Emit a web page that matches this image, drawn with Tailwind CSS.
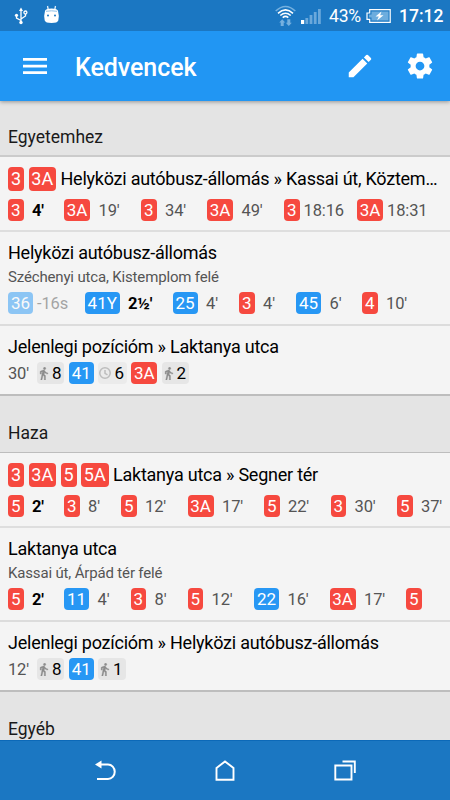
<!DOCTYPE html>
<html lang="hu">
<head>
<meta charset="utf-8">
<title>Kedvencek</title>
<script src="https://cdn.jsdelivr.net/npm/@tailwindcss/browser@4"></script>
</head>
<body class="w-[450px] h-[800px] overflow-hidden bg-[#e4e4e4] font-['Roboto','Noto_Sans',sans-serif] flex flex-col text-black">
<header class="relative z-10 shrink-0 shadow-[0_1px_4px_rgba(0,0,0,0.35)]">
  <div class="h-[31px] bg-[#1b77c2] flex items-center text-white">
    <svg class="ml-[14px] mt-px" width="14" height="18" viewBox="0 0 14 18" fill="none" stroke="#fff" stroke-width="1.3"><path d="M7 3v12M7 13.500L2.500 11V8M7 12L11.500 9V7"/><path d="M5 4l2-3.500L9 4z" fill="#fff" stroke="none"/><circle cx="2.500" cy="8.300" r="1.600" fill="#fff" stroke="none"/><circle cx="7" cy="15.500" r="1.700" fill="#fff" stroke="none"/><circle cx="11.400" cy="5.500" r="1.500"/></svg>
    <svg class="ml-[15px] -mt-[2px]" width="17" height="19" viewBox="0 0 17 19"><path d="M4.500 1l.8 4M12.500 1l-.8 4" stroke="#e3f0fa" stroke-width="1.300"/><path d="M2 6Q2.300 3.500 8.500 3.500T15 6Q16.500 11 15.300 15.500Q14.500 18 8.500 18T1.700 15.500Q.5 11 2 6z" fill="#fff"/><path d="M3 6.300Q8.500 5.300 14 6.300" stroke="#8fc0e8" fill="none"/><circle cx="5" cy="10.500" r="1" fill="#1b77c2"/><circle cx="12" cy="10.500" r="1" fill="#1b77c2"/></svg>
    <svg class="ml-[215px]" width="21" height="22" viewBox="0 0 21 22" fill="none" stroke="#fff" stroke-width="1.600"><path d="M.7 6Q10.500-3 20.300 6" stroke="#75b0df"/><path d="M3 8.300Q10.500 1.500 18 8.300M5.300 10.500Q10.500 6 15.700 10.500M7.700 12.600Q10.500 10.300 13.300 12.600"/><path d="M7.200 14.300l3 3.200H8.700v3.500H5.700v-3.500H4.200zM13.800 21l-3-3.200h1.500v-3.500h3v3.500h1.500z" fill="#75b0df" stroke="none"/></svg>
    <svg class="ml-[5px] mt-px" width="20" height="16" viewBox="0 0 20 16" fill="#6aa8db"><path d="M0 12h3.200v4H0z" fill="#fff"/><path d="M4.400 10h2.800v6H4.400zM8.600 7h2.800v9H8.600zM12.800 4h2.800v12h-2.800zM17 1h2.800v15H17z"/></svg>
    <span class="ml-[8px] w-[37px] text-[17.500px] leading-none whitespace-nowrap mt-[2px] tracking-[-0.2px]">43%</span>
    <svg width="25" height="14" viewBox="0 0 25 14"><path d="M3.700.7h20.500v12.600H3.700v-3H1V4h2.700z" fill="none" stroke="#fff" stroke-width="1.200"/><path d="M5.500 2.500h17v9h-17v-3H3v-3h2.500z" fill="#6dadde"/><path d="M15.500 2.500L9.500 7.500h3.300L11 11.500l6.500-5.300h-3.300z" fill="#fff"/></svg>
    <span class="ml-[8px] text-[17.5px] font-medium leading-none mt-[2px]">17:12</span>
  </div>
  <div class="h-[70px] bg-[#2196f3] flex items-center text-white">
    <svg class="ml-[23px]" width="24" height="16" viewBox="0 0 24 16" fill="#fff"><path d="M0 0h24v2.700H0zM0 6.700h24v2.700H0zM0 13.300h24V16H0z"/></svg>
    <h1 class="ml-[28px] text-[25px] leading-none font-medium mt-[2px] w-[265px] tracking-[-0.05px]">Kedvencek</h1>
    <svg class="ml-[5px]" width="30" height="30" viewBox="0 0 24 24" fill="#fff"><path d="M3 17.250V21h3.750L17.810 9.940l-3.750-3.750L3 17.250zM20.710 7.040a1 1 0 0 0 0-1.410l-2.340-2.340a1 1 0 0 0-1.410 0l-1.830 1.830 3.750 3.750 1.830-1.830z"/></svg>
    <svg class="ml-[30px]" width="30" height="30" viewBox="0 0 24 24" fill="#fff"><path d="M19.430 12.980c.04-.32.07-.64.07-.98s-.03-.66-.07-.98l2.110-1.650c.19-.15.24-.42.12-.64l-2-3.460c-.12-.22-.39-.3-.61-.22l-2.490 1c-.52-.4-1.080-.73-1.690-.98l-.38-2.650C14.460 2.180 14.250 2 14 2h-4c-.25 0-.46.18-.49.42l-.38 2.650c-.61.25-1.170.59-1.690.98l-2.490-1c-.23-.09-.49 0-.61.22l-2 3.460c-.13.22-.07.49.12.64l2.110 1.650c-.04.32-.07.65-.07.98s.03.66.07.98l-2.110 1.650c-.19.15-.24.42-.12.64l2 3.460c.12.22.39.3.61.22l2.490-1c.52.4 1.080.73 1.690.98l.38 2.650c.03.24.24.42.49.42h4c.25 0 .46-.18.49-.42l.38-2.650c.61-.25 1.170-.59 1.690-.98l2.490 1c.23.09.49 0 .61-.22l2-3.460c.12-.22.07-.49-.12-.64l-2.110-1.650zM12 15.500c-1.930 0-3.500-1.570-3.500-3.500s1.570-3.500 3.500-3.500 3.500 1.570 3.500 3.500-1.570 3.500-3.500 3.500z"/></svg>
  </div>
</header>
<main id="list" class="h-[639px] shrink-0 overflow-hidden"></main>
<nav class="h-[60px] shrink-0 bg-[#1b77c2] border-t border-[#0c69b8] flex items-center">
  <svg class="ml-[94px]" width="24" height="22" viewBox="0 0 24 22"><path d="M5 4.500h9a6.500 7 0 0 1 0 14.500H3" fill="none" stroke="#fff" stroke-width="2"/><path d="M1 4.500l6.500-4v8z" fill="#fff"/></svg>
  <svg class="ml-[97px]" width="20" height="22" viewBox="0 0 20 22"><path d="M1.500 8L10 1.400l8.500 6.600v11.700h-17z" fill="none" stroke="#fff" stroke-width="1.900"/></svg>
  <svg class="ml-[99px]" width="22" height="22" viewBox="0 0 22 22" fill="none" stroke="#fff" stroke-width="1.900"><path d="M1.300 5.500h16.200v14H1.300zM8.500 1.500h12.300v11.500"/></svg>
</nav>
<script>
const RED = 'bg-[#f6493f]', BLUE = 'bg-[#2797f4]';
const color = r => ['3', '3A', '4', '5', '5A'].includes(r) ? RED : BLUE;
const width = r => r.length === 1 ? 'w-[15.5px]' : r.length === 3 ? 'w-[34.5px]' : r.endsWith('A') ? 'w-[26px]' : 'w-[25px]';
const badge = r => `<span class="${color(r)} ${width(r)} h-[22px] rounded-[4px] text-white text-[17px] leading-[23px] flex justify-center shrink-0">${r}</span>`;
const bigBadge = r => `<span class="${color(r)} ${r.length === 1 ? 'w-[16px]' : 'w-[27.5px]'} h-[23.5px] mr-[4.500px] rounded-[4px] text-white text-[18px] leading-[24.500px] flex justify-center shrink-0">${r}</span>`;

// Each departure: [route, time, slot width in px, state]
const departures = items => `<div class="flex h-[22px]">${items.map(([r, t, w, s]) => `
  <div class="flex shrink-0 ${s === 'past' ? 'opacity-50' : ''}" style="width:${w}px">${badge(r)}
  <span class="${s === 'now' ? 'font-bold text-black' : 'text-[#555]'} ${t.length > 3 ? 'ml-[4px]' : 'ml-[8.5px]'} text-[16.500px] leading-[23px] tracking-[-0.12px] whitespace-nowrap">${t}</span></div>`).join('')}</div>`;

const WALK = `<svg class="w-[10px] h-[13px] shrink-0" viewBox="5 1 15 22" fill="#8b8b8b" stroke="#8b8b8b" stroke-width="0.6"><path d="M13.500 5.500c1.100 0 2-.9 2-2s-.9-2-2-2-2 .9-2 2 .9 2 2 2zM9.800 8.900L7 23h2.100l1.800-8 2.100 2v6h2v-7.500l-2.100-2 .6-3C14.800 12 16.800 13 19 13v-2c-1.900 0-3.500-1-4.300-2.400l-1-1.600c-.4-.6-1-1-1.700-1-.3 0-.5.1-.8.1L6 8.300V13h2V9.600l1.800-.7z"/></svg>`;
const CLOCK = `<svg class="w-[12px] h-[12px] shrink-0" viewBox="0 0 12 12" fill="none" stroke="#bdbdbd" stroke-width="1.500"><circle cx="6" cy="6" r="5.200"/><path d="M6 3v3.300l2.500 1.500"/></svg>`;
const step = ([k, n]) => k === 'route' ? badge(n)
  : `<span class="${k === 'walk' ? 'w-[27.5px] bg-[#e6e6e6] pl-[2px]' : 'w-[29px] bg-[#ebebeb] pl-px'} h-[22px] rounded-[4px] flex items-center justify-between pr-[3px] text-[17px] leading-[23px]">${k === 'walk' ? WALK : CLOCK}<span>${n}</span></span>`;
const trip = (t, steps) => `<div class="flex h-[22px] gap-[4.300px]"><span class="text-[16.500px] leading-[23px] tracking-[-0.15px] text-[#555] w-[24.700px]">${t}</span>${steps.map(step).join('')}</div>`;

const heading = (t, cls) => `<h2 class="${cls} px-2 text-[17.500px] leading-[22px] text-[#1a1a1a]">${t}</h2>`;
const name = t => `<span class="text-[18px] leading-[23px] tracking-[-0.24px] whitespace-nowrap">${t}</span>`;
const lineRow = (routes, t, deps) => `<div class="h-[75px] bg-[#f4f4f4] border-b-2 border-[#dedede] pl-2 pt-[10px] overflow-hidden"><div class="flex h-[24px] mb-[8px]">${routes.map(bigBadge).join('')}${name(t)}</div>${departures(deps)}</div>`;
const stopRow = (t, sub, deps) => `<div class="h-[94px] bg-[#f4f4f4] border-b-2 border-[#dcdcdc] pl-2 pt-[9px] flex flex-col overflow-hidden">${name(t)}<span class="text-[15px] leading-[20px] tracking-[-0.16px] text-[#555] mt-[3px] mb-[5px]">${sub}</span>${departures(deps)}</div>`;
const tripRow = (t, time, steps) => `<div class="h-[70px] bg-[#f4f4f4] border-b-2 border-[#bdbdbd] pl-2 pt-[9px] flex flex-col">${name(t)}<div class="mt-[4px]">${trip(time, steps)}</div></div>`;

document.getElementById('list').innerHTML = [
  heading('Egyetemhez', 'h-[56px] pt-[25px] border-b-2 border-[#cbcbcb]'),
  lineRow(['3', '3A'], 'Helyközi autóbusz-állomás » Kassai út, Köztem…', [['3', "4'", 56, 'now'], ['3A', "19'", 77], ['3', "34'", 66], ['3A', "49'", 77], ['3', '18:16', 73], ['3A', '18:31', 80]]),
  stopRow('Helyközi autóbusz-állomás', 'Széchenyi utca, Kistemplom felé', [['36', '-16s', 77, 'past'], ['41Y', "2½'", 87.5, 'now'], ['25', "4'", 66.5], ['3', "4'", 57], ['45', "6'", 66], ['4', "10'", 60]]),
  tripRow('Jelenlegi pozícióm » Laktanya utca', "30'", [['walk', 8], ['route', '41'], ['wait', 6], ['route', '3A'], ['walk', 2]]),
  heading('Haza', 'h-[57px] pt-[26px] border-b border-[#bdbdbd]'),
  lineRow(['3', '3A', '5', '5A'], 'Laktanya utca » Segner tér', [['5', "2'", 56, 'now'], ['3', "8'", 57], ['5', "12'", 66.5], ['3A', "17'", 76.5], ['5', "22'", 66.5], ['3', "30'", 66.5], ['5', "37'", 60]]),
  stopRow('Laktanya utca', 'Kassai út, Árpád tér felé', [['5', "2'", 56, 'now'], ['11', "4'", 66.5], ['3', "8'", 57], ['5', "12'", 66.5], ['22', "16'", 75.5], ['3A', "17'", 76.5], ['5', '', 40]]),
  tripRow('Jelenlegi pozícióm » Helyközi autóbusz-állomás', "12'", [['walk', 8], ['route', '41'], ['walk', 1]]),
  heading('Egyéb', 'h-[56px] pt-[26px]')
].join('');
</script>
</body>
</html>
